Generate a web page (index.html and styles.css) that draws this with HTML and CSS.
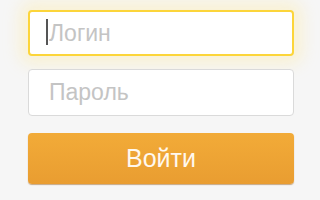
FILE: index.html
```html
<!DOCTYPE html>
<html lang="ru">
<head>
  <meta charset="UTF-8" />
  <title>Вход</title>
  <meta name="viewport" content="width=device-width, initial-scale=1.0" />
  <link rel="stylesheet" href="styles.css">
</head>
<body>

  <form class="login-form">
    <!-- LOGIN -->
    <div class="field field-focus">
      <span class="caret"></span>
      <input type="text" placeholder="Логин" />
    </div>

    <!-- PASSWORD -->
    <div class="field">
      <input type="password" placeholder="Пароль" />
    </div>

    <!-- SUBMIT -->
    <button type="button" class="login-button">Войти</button>
  </form>

</body>
</html>
```

FILE: styles.css
```css
/* ---------------------------------------------
   GENERAL / RESET
--------------------------------------------- */
* {
  margin: 0;
  padding: 0;
  box-sizing: border-box;
  font-family: "Liberation Sans", Arial, sans-serif;
}

body {
  background: #f6f6f6;
  width: 320px;
  height: 200px;
  overflow: hidden;
}

.login-form {
  display: flex;
  flex-direction: column;
  padding: 10px 26px 0 28px;
}

/* ---------------------------------------------
   FIELDS
--------------------------------------------- */
.field {
  position: relative;
  height: 47px;
  background: #fff;
  border: 1px solid #dadada;
  border-radius: 4px;
  display: flex;
  align-items: center;
  margin-bottom: 17px;
}

.field-focus {
  height: 46px;
  border: 2px solid #fcd53a;
  margin-bottom: 13px;
  box-shadow: 0 0 16px 8px rgba(255, 236, 160, 0.4);
}

.field input {
  width: 100%;
  height: 100%;
  border: none;
  outline: none;
  background: transparent;
  padding-left: 20px;
  font-size: 23px;
  color: #333;
}
.field-focus input {
  padding-left: 19px;
}
.field input::placeholder {
  color: #c4c4c4;
}

/* Fake text cursor in the focused field */
.caret {
  position: absolute;
  left: 16px;
  top: 7px;
  width: 2px;
  height: 26px;
  background: #555;
}

/* ---------------------------------------------
   BUTTON
--------------------------------------------- */
.login-button {
  height: 51px;
  border: none;
  border-radius: 4px;
  background: linear-gradient(#f2ab38, #e99d31);
  box-shadow: 0 1px 1px rgba(150, 90, 20, 0.5);
  color: #fff8ee;
  font-size: 25px;
  cursor: pointer;
}
```
